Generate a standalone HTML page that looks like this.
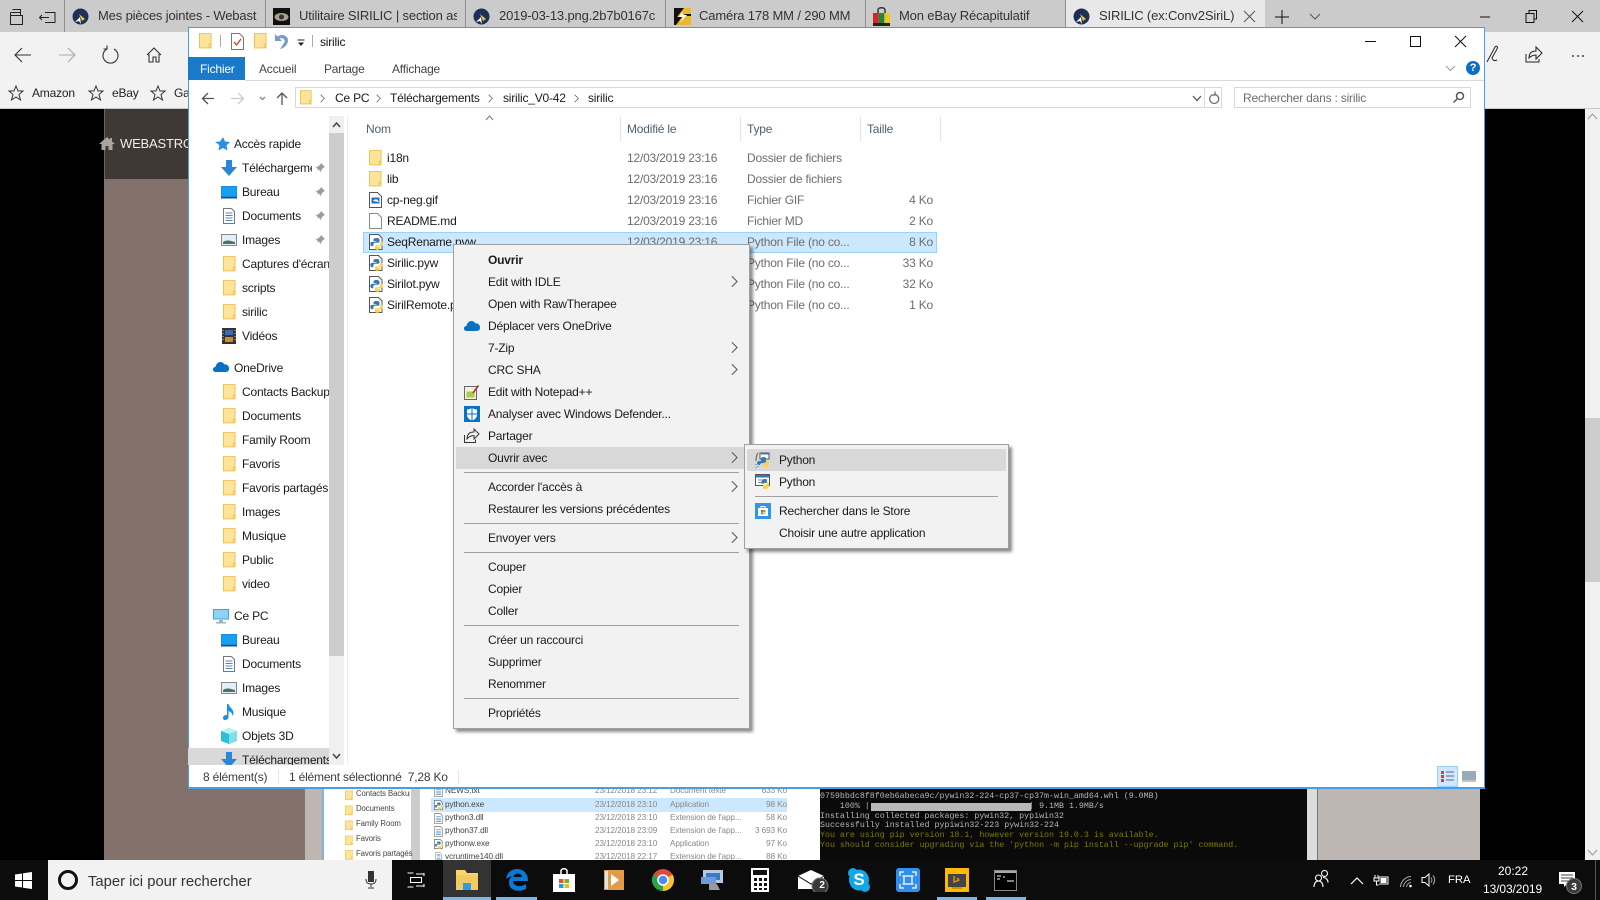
<!DOCTYPE html>
<html lang="fr"><head><meta charset="utf-8"><title>SIRILIC</title>
<style>
html,body{margin:0;padding:0;width:1600px;height:900px;overflow:hidden;background:#000}
body{position:relative;font:12px/16px "Liberation Sans",sans-serif;letter-spacing:-.2px;color:#1a1a1a}
.a,.t,svg.i{position:absolute}
.t{white-space:nowrap;height:16px}
.g{color:#6d6d6d}
.h{color:#4c607a}
.tab{position:absolute;top:8px;font-size:13px;letter-spacing:-.15px;color:#333;white-space:nowrap;overflow:hidden;height:16px}
.sep{position:absolute;background:#a0a0a0;height:1px}
.tb{position:absolute;color:#fff;white-space:nowrap;letter-spacing:0}
.sm{position:absolute;font-size:8.2px;line-height:10px;color:#444;white-space:nowrap;letter-spacing:-.1px}
.tm{position:absolute;left:820px;font:8.3px/10px "Liberation Mono",monospace;letter-spacing:0;color:#b5b5b5;white-space:pre}
</style></head><body>
<svg width="0" height="0" style="position:absolute"><defs>
<symbol id="fo" viewBox="0 0 14 17"><path d="M.5.5h12.5v15.5H.5z" fill="#fee49a" stroke="#eac04e"/><path d="M11 16v-4h2.500" fill="none" stroke="#eac04e"/></symbol>
<symbol id="py" viewBox="0 0 14 16"><path d="M.5.5h9l3.500 3.500v11.500H.500z" fill="#fff" stroke="#555"/><path d="M7.500 4C5 4 4.500 5 4.500 6v1.300h3v.6H3C1.800 7.900 1.300 8.800 1.300 10s.6 2.200 1.700 2.200h1.300v-1.700c0-1 .9-1.800 1.900-1.800h2.900c.9 0 1.400-.7 1.400-1.500V6c0-1-1-2-2.500-2z" fill="#3a78b0"/><path d="M8 15.800c2.500 0 3-1 3-2v-1.300H8v-.6h4.500c1 0 1.400-.9 1.400-2.100s-.5-2.100-1.500-2.100h-1.200v1.600c0 1-.9 1.900-1.900 1.900H7.400c-.9 0-1.400.7-1.400 1.500v1.100c0 1 .7 2 2 2z" fill="#fdd24a"/></symbol>
<symbol id="ch" viewBox="0 0 8 14"><path d="M1 1l6 6-6 6" fill="none" stroke="#44546a" stroke-width="1.100"/></symbol>
<symbol id="st" viewBox="0 0 16 16"><path d="M8 1l2 5h5l-4 3.500 1.500 5.500L8 12l-4.500 3L5 9.500 1 6h5z" fill="none" stroke="#333"/></symbol>
<symbol id="od" viewBox="0 0 16 10"><path d="M3 10c-2 0-3-1-3-2.500S1 5 2.500 5C3 2 5 0 7.500 0c2 0 3 1 4 2.500 2-.5 4.500 1 4.500 4 0 2-1 3.500-3 3.500z" fill="#0a72c4"/></symbol>
<symbol id="pin" viewBox="0 0 10 10"><path d="M6 0l4 4-1.500.5-2 2.500-.5 2-2.500-2.500L1 9l2-2.500L.8 4l2-.5 2.500-2z" fill="#9c9c9c"/></symbol>
<symbol id="mon" viewBox="0 0 16 13"><path d="M0 0h16v12.500H0z" fill="#1e88d8"/><path d="M1 1h14v9H1z" fill="#16a0f0"/><path d="M0 11h16v1.500H0z" fill="#0f4f8a"/></symbol>
<symbol id="doc" viewBox="0 0 12 16"><path d="M.5.500h8l3 3v12H.500z" fill="#fff" stroke="#777"/><path d="M2.500 5h7M2.500 7.500h7M2.500 10h7M2.500 12.500h7" stroke="#4a8ac4"/></symbol>
<symbol id="img" viewBox="0 0 16 12"><path d="M.5.500h15v11H.500z" fill="#dff0fa" stroke="#888"/><path d="M2 8c3-2 5-2 12 0v2H2z" fill="#47745a"/></symbol>
<symbol id="dn" viewBox="0 0 16 16"><path d="M5 0h6v7h5l-8 9-8-9h5z" fill="#2a86d8"/></symbol>
</defs></svg>

<!-- browser chrome -->
<div class="a" style="left:0;top:0;width:1600px;height:32px;background:#cbcbcb"></div>
<div class="a" style="left:0;top:32px;width:1600px;height:76px;background:#f2f2f2;border-bottom:1px solid #c8c8c8"></div>
<div class="a" style="left:1065px;top:0;width:200px;height:32px;background:#e8e8e8"></div>
<div class="a" style="left:64px;top:0;width:1px;height:32px;background:#8e8e8e"></div>
<div class="a" style="left:265px;top:0;width:1px;height:32px;background:#8e8e8e"></div>
<div class="a" style="left:465px;top:0;width:1px;height:32px;background:#8e8e8e"></div>
<div class="a" style="left:665px;top:0;width:1px;height:32px;background:#8e8e8e"></div>
<div class="a" style="left:865px;top:0;width:1px;height:32px;background:#8e8e8e"></div>
<div class="a" style="left:1065px;top:0;width:1px;height:32px;background:#8e8e8e"></div>
<svg class="i" style="left:9px;top:8px" width="64" height="18" fill="none" stroke="#222"><path d="M3.500 1.500h8v3M1.500 4.500h10v3M1.500 4.500v12h12v-9h-12"/><path d="M36 4.500h10v10H36M31 9.500h9M33 7l-2.500 2.500L33 12"/></svg>
<svg class="i" style="left:72px;top:8px" width="17" height="17"><circle cx="8.500" cy="8.500" r="8" fill="#1d3158"/><path d="M8 9l-5 5 4-1 2 3z" fill="#fff"/><path d="M7 6l6 5-3 2z" fill="#e6c13a"/></svg>
<div class="tab" style="left:98px;width:159px">Mes pièces jointes - Webast</div>
<svg class="i" style="left:273px;top:8px" width="17" height="17"><path d="M0 0h17v17H0z" fill="#111"/><ellipse cx="8.500" cy="9" rx="7" ry="4" fill="#a7a28a"/><circle cx="8.500" cy="9" r="2.500" fill="#333"/></svg>
<div class="tab" style="left:299px;width:158px">Utilitaire SIRILIC | section as</div>
<svg class="i" style="left:473px;top:8px" width="17" height="17"><circle cx="8.500" cy="8.500" r="8" fill="#1d3158"/><path d="M8 9l-5 5 4-1 2 3z" fill="#fff"/><path d="M7 6l6 5-3 2z" fill="#e6c13a"/></svg>
<div class="tab" style="left:499px;width:158px">2019-03-13.png.2b7b0167c</div>
<svg class="i" style="left:674px;top:8px" width="17" height="17"><path d="M0 0h17v17H0z" fill="#e9b92e"/><path d="M10 0L3 9h5L2 17h-2V0zM10 6h7v2h-5z" fill="#111"/><path d="M8 4L5 9h4l-3 6 7-8H9z" fill="#fff"/></svg>
<div class="tab" style="left:699px;width:158px">Caméra 178 MM / 290 MM</div>
<svg class="i" style="left:873px;top:7px" width="17" height="19"><path d="M5 6V3c0-3 7-3 7 0v3" fill="none" stroke="#333" stroke-width="1.500"/><path d="M0 6h5.700v13H0z" fill="#d0262d"/><path d="M5.700 6h5.700v13H5.700z" fill="#1b8a3a"/><path d="M11.400 6H17v13h-5.600z" fill="#edc61e"/><path d="M0 16h17v3H0z" fill="#222"/></svg>
<div class="tab" style="left:899px;width:158px">Mon eBay Récapitulatif</div>
<svg class="i" style="left:1073px;top:8px" width="17" height="17"><circle cx="8.500" cy="8.500" r="8" fill="#1d3158"/><path d="M8 9l-5 5 4-1 2 3z" fill="#fff"/><path d="M7 6l6 5-3 2z" fill="#e6c13a"/></svg>
<div class="tab" style="left:1099px;width:138px">SIRILIC (ex:Conv2SiriL) -</div>
<svg class="i" style="left:1243px;top:10px" width="84" height="14" fill="none" stroke="#333"><path d="M1 1l11 11M12 1L1 12" stroke="#555"/><path d="M39 0v14M32 7h14" stroke="#111"/><path d="M67 4l5 5 5-5" stroke="#555"/></svg>
<svg class="i" style="left:1478px;top:9px" width="110" height="15" fill="none" stroke="#111"><path d="M2 8h10"/><path d="M48 4.500h8v9h-8zM51 4.500v-3h7.500v8.500H56"/><path d="M94 2l11 11M105 2L94 13"/></svg>
<!-- nav icons -->
<svg class="i" style="left:14px;top:45px" width="155" height="20" fill="none" stroke="#333" stroke-width="1.100"><path d="M1 10h16M8 3L1 10l7 7"/><path d="M45 10h16M54 3l7 7-7 7" stroke="#aaa"/><path d="M93 4a7.500 7.500 0 1 0 7 0M93 .5v3.500h-3.500"/><path d="M133 10l7-7 7 7M135 9v8h4v-5h3v5h3V9"/></svg>
<svg class="i" style="left:8px;top:85px" width="16" height="16"><use href="#st"/></svg>
<div class="t" style="left:32px;top:85px;color:#222">Amazon</div>
<svg class="i" style="left:88px;top:85px" width="16" height="16"><use href="#st"/></svg>
<div class="t" style="left:112px;top:85px;color:#222">eBay</div>
<svg class="i" style="left:150px;top:85px" width="16" height="16"><use href="#st"/></svg>
<div class="t" style="left:174px;top:85px;color:#222;width:14px;overflow:hidden">Gamma</div>
<svg class="i" style="left:1486px;top:44px" width="100" height="20" fill="none" stroke="#222"><path d="M1 18L9 3c2-2 3 0 2 2L6 14c1 3 3 3 5 2"/><path d="M40 10v8h13v-3M43 14c0-5 3-7 7-7V3l6 6-6 6v-4c-3 0-5 1-7 3z"/><path d="M86 12h2M91 12h2M96 12h2" stroke-width="1.200"/></svg>

<!-- page under -->
<div class="a" style="left:0;top:109px;width:1600px;height:751px;background:#000"></div>
<div class="a" style="left:104px;top:109px;width:85px;height:70px;background:#3f3835;border-left:1px solid #666"></div>
<div class="a" style="left:104px;top:179px;width:201px;height:681px;background:#83726b"></div>
<div class="a" style="left:305px;top:788px;width:17px;height:72px;background:#bdb6b2"></div>
<svg class="i" style="left:99px;top:136px" width="16" height="15"><path d="M8 1L0 8h2.500v6h4v-4h3v4h4V8H16l-3-2.600V2h-2v1.700z" fill="#a9a29e"/></svg>
<div class="t" style="left:120px;top:136px;color:#eee;font-size:13px;width:69px;overflow:hidden">WEBASTRO</div>
<div class="a" style="left:1480px;top:788px;width:105px;height:72px;background:#000"></div>
<div class="a" style="left:1585px;top:109px;width:15px;height:751px;background:#f0f0f0"></div>
<div class="a" style="left:1585px;top:418px;width:15px;height:164px;background:#cdcdcd"></div>
<svg class="i" style="left:1587px;top:113px" width="11" height="7" fill="none" stroke="#999"><path d="M1 6l4.500-5L10 6"/></svg>
<svg class="i" style="left:1587px;top:849px" width="11" height="7" fill="none" stroke="#999"><path d="M1 1l4.500 5L10 1"/></svg>
<!-- window behind -->
<div class="a" style="left:322px;top:788px;width:2px;height:72px;background:#7fb4e6"></div>
<div class="a" style="left:324px;top:788px;width:496px;height:72px;background:#fff"></div>
<div class="a" style="left:411px;top:788px;width:9px;height:72px;background:#ccc"></div>
<div class="a" style="left:431px;top:798px;width:356px;height:14px;background:#cce8ff"></div>
<svg class="i" style="left:345px;top:790px" width="8" height="11"><use href="#fo"/></svg><div class="sm" style="left:356px;top:789px;font-size:7.800px;width:54px;overflow:hidden">Contacts Backup</div>
<svg class="i" style="left:345px;top:805px" width="8" height="11"><use href="#fo"/></svg><div class="sm" style="left:356px;top:804px;font-size:7.800px">Documents</div>
<svg class="i" style="left:345px;top:820px" width="8" height="11"><use href="#fo"/></svg><div class="sm" style="left:356px;top:819px;font-size:7.800px">Family Room</div>
<svg class="i" style="left:345px;top:835px" width="8" height="11"><use href="#fo"/></svg><div class="sm" style="left:356px;top:834px;font-size:7.800px">Favoris</div>
<svg class="i" style="left:345px;top:850px" width="8" height="10"><use href="#fo"/></svg><div class="sm" style="left:356px;top:849px;font-size:7.800px">Favoris partagés</div>
<svg class="i" style="left:434px;top:786px" width="9" height="11"><use href="#doc"/></svg><div class="sm" style="left:445px;top:786px">NEWS.txt</div><div class="sm" style="left:595px;top:786px;color:#888">23/12/2018 23:12</div><div class="sm" style="left:670px;top:786px;color:#888">Document texte</div><div class="sm" style="left:757px;width:30px;text-align:right;top:786px;color:#888">633 Ko</div>
<svg class="i" style="left:434px;top:800px" width="9" height="10"><use href="#py"/></svg><div class="sm" style="left:445px;top:800px">python.exe</div><div class="sm" style="left:595px;top:800px;color:#888">23/12/2018 23:10</div><div class="sm" style="left:670px;top:800px;color:#888">Application</div><div class="sm" style="left:757px;width:30px;text-align:right;top:800px;color:#888">98 Ko</div>
<svg class="i" style="left:434px;top:813px" width="9" height="11"><use href="#doc"/></svg><div class="sm" style="left:445px;top:813px">python3.dll</div><div class="sm" style="left:595px;top:813px;color:#888">23/12/2018 23:10</div><div class="sm" style="left:670px;top:813px;color:#888">Extension de l'app...</div><div class="sm" style="left:757px;width:30px;text-align:right;top:813px;color:#888">58 Ko</div>
<svg class="i" style="left:434px;top:826px" width="9" height="11"><use href="#doc"/></svg><div class="sm" style="left:445px;top:826px">python37.dll</div><div class="sm" style="left:595px;top:826px;color:#888">23/12/2018 23:09</div><div class="sm" style="left:670px;top:826px;color:#888">Extension de l'app...</div><div class="sm" style="left:747px;width:40px;text-align:right;top:826px;color:#888">3 693 Ko</div>
<svg class="i" style="left:434px;top:839px" width="9" height="10"><use href="#py"/></svg><div class="sm" style="left:445px;top:839px">pythonw.exe</div><div class="sm" style="left:595px;top:839px;color:#888">23/12/2018 23:10</div><div class="sm" style="left:670px;top:839px;color:#888">Application</div><div class="sm" style="left:757px;width:30px;text-align:right;top:839px;color:#888">97 Ko</div>
<svg class="i" style="left:434px;top:852px" width="9" height="8"><use href="#doc"/></svg><div class="sm" style="left:445px;top:852px;height:8px;overflow:hidden">vcruntime140.dll</div><div class="sm" style="left:595px;top:852px;height:8px;overflow:hidden;color:#888">23/12/2018 22:17</div><div class="sm" style="left:670px;top:852px;height:8px;overflow:hidden;color:#888">Extension de l'app...</div><div class="sm" style="left:757px;width:30px;text-align:right;top:852px;height:8px;overflow:hidden;color:#888">88 Ko</div>
<!-- terminal -->
<div class="a" style="left:820px;top:788px;width:487px;height:72px;background:#0a0a0a"></div>
<div class="a" style="left:1307px;top:788px;width:10px;height:72px;background:#dcdcdc"></div>
<div class="a" style="left:1317px;top:788px;width:163px;height:72px;background:#bdb6b2;border-left:1px solid #777;box-sizing:border-box"></div>
<div class="tm" style="top:792px">0759bbdc8f8f0eb6abeca9c/pywin32-224-cp37-cp37m-win_amd64.whl (9.0MB)</div>
<div class="tm" style="top:802px">    100% |                                | 9.1MB 1.9MB/s</div>
<div class="a" style="left:871px;top:803px;width:160px;height:8px;background:#b8b8b8"></div>
<div class="tm" style="top:812px">Installing collected packages: pywin32, pypiwin32</div>
<div class="tm" style="top:821px">Successfully installed pypiwin32-223 pywin32-224</div>
<div class="tm" style="top:831px;color:#7c7c00">You are using pip version 18.1, however version 19.0.3 is available.</div>
<div class="tm" style="top:841px;color:#7c7c00">You should consider upgrading via the 'python -m pip install --upgrade pip' command.</div>

<!-- explorer -->
<div class="a" style="left:188px;top:27px;width:1297px;height:762px;background:#fff;border:1px solid #4a9ce8;border-bottom-width:2px;box-sizing:border-box"></div>
<svg class="i" style="left:199px;top:33px" width="13" height="16"><use href="#fo"/></svg>
<div class="a" style="left:220px;top:35px;width:1px;height:12px;background:#aaa"></div>
<svg class="i" style="left:231px;top:33px" width="13" height="17"><path d="M.5.500h8l4 4v12H.500z" fill="#fff" stroke="#777"/><path d="M3 9l2.500 3L10 6" fill="none" stroke="#d83a20" stroke-width="1.300"/></svg>
<svg class="i" style="left:254px;top:33px" width="13" height="16"><use href="#fo"/></svg>
<svg class="i" style="left:274px;top:34px" width="15" height="16"><path d="M1 0v7h7L5.500 4.500C9 3 12 6 10 9l-4 6c5-1 8-5 8-9C14 2 8-1 3.500 2.500L1 0z" fill="#7b9bc4"/></svg>
<svg class="i" style="left:296px;top:39px" width="10" height="8"><path d="M1.500 1h7" stroke="#222"/><path d="M2 3.500h6L5 7z" fill="#222"/></svg>
<div class="a" style="left:312px;top:35px;width:1px;height:12px;background:#aaa"></div>
<div class="t" style="left:320px;top:34px;color:#111">sirilic</div>
<svg class="i" style="left:1364px;top:35px" width="105" height="13" fill="none" stroke="#111"><path d="M1 6.500h11"/><path d="M46.500 1.500h10v10h-10z"/><path d="M91 1l11 11M102 1L91 12"/></svg>
<div class="a" style="left:188px;top:57px;width:57px;height:23px;background:#1979ca"></div>
<div class="t" style="left:200px;top:61px;color:#fff">Fichier</div>
<div class="t" style="left:259px;top:61px;color:#444">Accueil</div>
<div class="t" style="left:324px;top:61px;color:#444">Partage</div>
<div class="t" style="left:392px;top:61px;color:#444">Affichage</div>
<div class="a" style="left:245px;top:80px;width:1239px;height:1px;background:#dadada"></div>
<svg class="i" style="left:1445px;top:65px" width="11" height="7" fill="none" stroke="#999"><path d="M1 1l4.500 4.500L10 1"/></svg>
<div class="a" style="left:1466px;top:61px;width:14px;height:14px;border-radius:50%;background:#0b6fc9;color:#fff;font:bold 11px/14px 'Liberation Sans',sans-serif;text-align:center">?</div>
<!-- address -->
<svg class="i" style="left:201px;top:91px" width="92" height="15" fill="none" stroke="#555" stroke-width="1.300"><path d="M1 7.500h12M7 2L1.500 7.500 7 13"/><path d="M30 7.500h12M37 2l5.500 5.500L37 13" stroke="#ccc"/><path d="M59 6l2.500 2.500L64 6" stroke="#888"/><path d="M81 14V2M76 7l5-5 5 5"/></svg>
<div class="a" style="left:295px;top:87px;width:927px;height:21px;border:1px solid #d9d9d9;box-sizing:border-box"></div>
<svg class="i" style="left:300px;top:90px" width="12" height="15"><use href="#fo"/></svg>
<svg class="i" style="left:320px;top:94px" width="5" height="9"><use href="#ch"/></svg>
<div class="t" style="left:335px;top:90px">Ce PC</div>
<svg class="i" style="left:376px;top:94px" width="5" height="9"><use href="#ch"/></svg>
<div class="t" style="left:390px;top:90px">Téléchargements</div>
<svg class="i" style="left:488px;top:94px" width="5" height="9"><use href="#ch"/></svg>
<div class="t" style="left:503px;top:90px">sirilic_V0-42</div>
<svg class="i" style="left:574px;top:94px" width="5" height="9"><use href="#ch"/></svg>
<div class="t" style="left:588px;top:90px">sirilic</div>
<svg class="i" style="left:1192px;top:95px" width="10" height="7" fill="none" stroke="#555" stroke-width="1.300"><path d="M1 1l4 4.500L9 1"/></svg>
<div class="a" style="left:1204px;top:88px;width:1px;height:19px;background:#d9d9d9"></div>
<svg class="i" style="left:1208px;top:91px" width="12" height="14" fill="none" stroke="#666" stroke-width="1.200"><path d="M7 3.500a4.500 4.500 0 1 1-3 .5M7 .5v3.500H3.500"/></svg>
<div class="a" style="left:1234px;top:87px;width:237px;height:21px;border:1px solid #d9d9d9;box-sizing:border-box"></div>
<div class="t" style="left:1243px;top:90px;color:#6d6d6d">Rechercher dans : sirilic</div>
<svg class="i" style="left:1452px;top:91px" width="13" height="13" fill="none" stroke="#555" stroke-width="1.500"><circle cx="8" cy="5" r="3.500"/><path d="M5.500 7.500L1.500 11.500"/></svg>
<!-- nav pane -->
<div class="a" style="left:329px;top:116px;width:15px;height:649px;background:#f0f0f0"></div>
<div class="a" style="left:329px;top:133px;width:15px;height:523px;background:#cdcdcd"></div>
<svg class="i" style="left:332px;top:121px" width="9" height="7" fill="none" stroke="#444" stroke-width="1.500"><path d="M1 6l3.500-4L8 6"/></svg>
<svg class="i" style="left:332px;top:753px" width="9" height="7" fill="none" stroke="#444" stroke-width="1.500"><path d="M1 1l3.500 4L8 1"/></svg>
<div class="a" style="left:188px;top:748px;width:141px;height:17px;background:#d9d9d9"></div>
<div class="a" style="left:347px;top:116px;width:1px;height:649px;background:#ececec"></div>

<svg class="i" style="left:215px;top:137px" width="15" height="14"><path d="M8 0l2 4.500 5 .5-3.500 3.500 1 5L8 11l-4.500 2.500 1-5L3 7 0 5l5-.5z" fill="#2a8fe0"/></svg>
<div class="t" style="left:234px;top:136px">Accès rapide</div>
<svg class="i" style="left:221px;top:160px" width="16" height="16"><use href="#dn"/></svg>
<div class="t" style="left:242px;top:160px;width:70px;overflow:hidden">Téléchargements</div>
<svg class="i" style="left:315px;top:163px" width="10" height="10"><use href="#pin"/></svg>
<svg class="i" style="left:221px;top:186px" width="16" height="13"><use href="#mon"/></svg>
<div class="t" style="left:242px;top:184px">Bureau</div>
<svg class="i" style="left:315px;top:187px" width="10" height="10"><use href="#pin"/></svg>
<svg class="i" style="left:223px;top:208px" width="12" height="16"><use href="#doc"/></svg>
<div class="t" style="left:242px;top:208px">Documents</div>
<svg class="i" style="left:315px;top:211px" width="10" height="10"><use href="#pin"/></svg>
<svg class="i" style="left:221px;top:234px" width="16" height="12"><use href="#img"/></svg>
<div class="t" style="left:242px;top:232px">Images</div>
<svg class="i" style="left:315px;top:235px" width="10" height="10"><use href="#pin"/></svg>
<svg class="i" style="left:223px;top:256px" width="13" height="16"><use href="#fo"/></svg>
<div class="t" style="left:242px;top:256px;width:87px;overflow:hidden">Captures d'écran</div>
<svg class="i" style="left:223px;top:280px" width="13" height="16"><use href="#fo"/></svg>
<div class="t" style="left:242px;top:280px">scripts</div>
<svg class="i" style="left:223px;top:304px" width="13" height="16"><use href="#fo"/></svg>
<div class="t" style="left:242px;top:304px">sirilic</div>
<svg class="i" style="left:222px;top:328px" width="14" height="16"><path d="M0 0h14v16H0z" fill="#333"/><path d="M3 2h8v5H3z" fill="#3a6ab0"/><path d="M3 9h8v5H3z" fill="#c8902a"/><path d="M1 2v12M13 2v12" stroke="#ddd" stroke-dasharray="1 2"/></svg>
<div class="t" style="left:242px;top:328px">Vidéos</div>
<svg class="i" style="left:213px;top:362px" width="16" height="10"><use href="#od"/></svg>
<div class="t" style="left:234px;top:360px">OneDrive</div>
<svg class="i" style="left:223px;top:384px" width="13" height="16"><use href="#fo"/></svg>
<div class="t" style="left:242px;top:384px;width:87px;overflow:hidden">Contacts Backup</div>
<svg class="i" style="left:223px;top:408px" width="13" height="16"><use href="#fo"/></svg>
<div class="t" style="left:242px;top:408px">Documents</div>
<svg class="i" style="left:223px;top:432px" width="13" height="16"><use href="#fo"/></svg>
<div class="t" style="left:242px;top:432px">Family Room</div>
<svg class="i" style="left:223px;top:456px" width="13" height="16"><use href="#fo"/></svg>
<div class="t" style="left:242px;top:456px">Favoris</div>
<svg class="i" style="left:223px;top:480px" width="13" height="16"><use href="#fo"/></svg>
<div class="t" style="left:242px;top:480px;width:87px;overflow:hidden">Favoris partagés</div>
<svg class="i" style="left:223px;top:504px" width="13" height="16"><use href="#fo"/></svg>
<div class="t" style="left:242px;top:504px">Images</div>
<svg class="i" style="left:223px;top:528px" width="13" height="16"><use href="#fo"/></svg>
<div class="t" style="left:242px;top:528px">Musique</div>
<svg class="i" style="left:223px;top:552px" width="13" height="16"><use href="#fo"/></svg>
<div class="t" style="left:242px;top:552px">Public</div>
<svg class="i" style="left:223px;top:576px" width="13" height="16"><use href="#fo"/></svg>
<div class="t" style="left:242px;top:576px">video</div>
<svg class="i" style="left:213px;top:609px" width="16" height="15"><path d="M0 0h16v10.500H0z" fill="#3aa6ea"/><path d="M1 1h14v8.500H1z" fill="#8fd2f6"/><path d="M6 11h4v2h3v1.500H3V13h3z" fill="#9fb2be"/></svg>
<div class="t" style="left:234px;top:608px">Ce PC</div>
<svg class="i" style="left:221px;top:634px" width="16" height="13"><use href="#mon"/></svg>
<div class="t" style="left:242px;top:632px">Bureau</div>
<svg class="i" style="left:223px;top:656px" width="12" height="16"><use href="#doc"/></svg>
<div class="t" style="left:242px;top:656px">Documents</div>
<svg class="i" style="left:221px;top:682px" width="16" height="12"><use href="#img"/></svg>
<div class="t" style="left:242px;top:680px">Images</div>
<svg class="i" style="left:223px;top:704px" width="12" height="16"><path d="M4 0h1.500c.5 3 5 5 5 9 0 1-.5 2-1 3 0-3-2-4-4-5v6c0 2-2 3-3.500 3S0 15 0 13.500 2 11 4 11z" fill="#1a90e8"/></svg>
<div class="t" style="left:242px;top:704px">Musique</div>
<svg class="i" style="left:221px;top:728px" width="16" height="16"><path d="M8 0l8 3v10l-8 3-8-3V3z" fill="#2cc0d8"/><path d="M8 6l8-3v10l-8 3z" fill="#7be0ea"/><path d="M8 6L0 3l8-3 8 3z" fill="#b9f0f5"/></svg>
<div class="t" style="left:242px;top:728px">Objets 3D</div>
<svg class="i" style="left:221px;top:752px" width="16" height="13" viewBox="0 0 16 13" preserveAspectRatio="xMinYMin slice"><use href="#dn" width="16" height="16"/></svg>
<div class="t" style="left:242px;top:752px;width:87px;height:13px;overflow:hidden">Téléchargements</div>
<!-- list -->
<svg class="i" style="left:485px;top:115px" width="9" height="6" fill="none" stroke="#777"><path d="M1 5l3.500-4L8 5"/></svg>
<div class="t h" style="left:366px;top:121px">Nom</div>
<div class="t h" style="left:627px;top:121px">Modifié le</div>
<div class="t h" style="left:747px;top:121px">Type</div>
<div class="t h" style="left:867px;top:121px">Taille</div>
<div class="a" style="left:620px;top:116px;width:1px;height:25px;background:#e5e5e5"></div>
<div class="a" style="left:740px;top:116px;width:1px;height:25px;background:#e5e5e5"></div>
<div class="a" style="left:860px;top:116px;width:1px;height:25px;background:#e5e5e5"></div>
<div class="a" style="left:940px;top:116px;width:1px;height:25px;background:#e5e5e5"></div>
<div class="a" style="left:363px;top:232px;width:574px;height:21px;background:#cce8ff;border:1px solid #99d1ff;box-sizing:border-box"></div>
<svg class="i" style="left:369px;top:150px" width="13" height="16"><use href="#fo"/></svg>
<div class="t" style="left:387px;top:150px">i18n</div><div class="t g" style="left:627px;top:150px">12/03/2019 23:16</div><div class="t g" style="left:747px;top:150px">Dossier de fichiers</div>
<svg class="i" style="left:369px;top:171px" width="13" height="16"><use href="#fo"/></svg>
<div class="t" style="left:387px;top:171px">lib</div><div class="t g" style="left:627px;top:171px">12/03/2019 23:16</div><div class="t g" style="left:747px;top:171px">Dossier de fichiers</div>
<svg class="i" style="left:369px;top:192px" width="13" height="16"><path d="M.5.500h8l4 4v11H.500z" fill="#fff" stroke="#555"/><path d="M2.500 5.500h8v6h-8z" fill="#1c72c4"/><path d="M4 9l2-2 1 1 1-1 2 3z" fill="#fff"/></svg>
<div class="t" style="left:387px;top:192px">cp-neg.gif</div><div class="t g" style="left:627px;top:192px">12/03/2019 23:16</div><div class="t g" style="left:747px;top:192px">Fichier GIF</div><div class="t g" style="left:893px;width:40px;text-align:right;top:192px">4 Ko</div>
<svg class="i" style="left:369px;top:213px" width="13" height="16"><path d="M.5.500h8l4 4v11H.500z" fill="#fff" stroke="#888"/></svg>
<div class="t" style="left:387px;top:213px">README.md</div><div class="t g" style="left:627px;top:213px">12/03/2019 23:16</div><div class="t g" style="left:747px;top:213px">Fichier MD</div><div class="t g" style="left:893px;width:40px;text-align:right;top:213px">2 Ko</div>
<svg class="i" style="left:369px;top:234px" width="14" height="16"><use href="#py"/></svg>
<div class="t" style="left:387px;top:234px">SeqRename.pyw</div><div class="t g" style="left:627px;top:234px">12/03/2019 23:16</div><div class="t g" style="left:747px;top:234px">Python File (no co...</div><div class="t g" style="left:893px;width:40px;text-align:right;top:234px">8 Ko</div>
<svg class="i" style="left:369px;top:255px" width="14" height="16"><use href="#py"/></svg>
<div class="t" style="left:387px;top:255px">Sirilic.pyw</div><div class="t g" style="left:627px;top:255px">12/03/2019 23:16</div><div class="t g" style="left:747px;top:255px">Python File (no co...</div><div class="t g" style="left:893px;width:40px;text-align:right;top:255px">33 Ko</div>
<svg class="i" style="left:369px;top:276px" width="14" height="16"><use href="#py"/></svg>
<div class="t" style="left:387px;top:276px">Sirilot.pyw</div><div class="t g" style="left:627px;top:276px">12/03/2019 23:16</div><div class="t g" style="left:747px;top:276px">Python File (no co...</div><div class="t g" style="left:893px;width:40px;text-align:right;top:276px">32 Ko</div>
<svg class="i" style="left:369px;top:297px" width="14" height="16"><use href="#py"/></svg>
<div class="t" style="left:387px;top:297px">SirilRemote.pyw</div><div class="t g" style="left:627px;top:297px">12/03/2019 23:16</div><div class="t g" style="left:747px;top:297px">Python File (no co...</div><div class="t g" style="left:893px;width:40px;text-align:right;top:297px">1 Ko</div>
<!-- status -->
<div class="t" style="left:203px;top:769px;color:#3c3c3c">8 élément(s)</div>
<div class="a" style="left:278px;top:770px;width:1px;height:14px;background:#e5e5e5"></div>
<div class="t" style="left:289px;top:769px;color:#3c3c3c">1 élément sélectionné&nbsp; 7,28 Ko</div>
<div class="a" style="left:458px;top:770px;width:1px;height:14px;background:#e5e5e5"></div>
<div class="a" style="left:1437px;top:766px;width:21px;height:21px;background:#cce8ff;border:1px solid #99d1ff;box-sizing:border-box"></div>
<svg class="i" style="left:1441px;top:770px" width="38" height="13"><path d="M0 1h3v3H0zM0 5h3v3H0zM0 9h3v3H0z" fill="#c44"/><path d="M5 2h8M5 6h8M5 10h8" stroke="#667"/><path d="M21 1h14v9H21z" fill="#9ab"/><path d="M21 11h14" stroke="#888"/></svg>

<!-- context menu -->
<div class="a" style="left:453px;top:244px;width:297px;height:485px;background:#f2f2f2;border:1px solid #a0a0a0;box-sizing:border-box;box-shadow:3px 3px 3px rgba(0,0,0,.45)"></div>
<div class="a" style="left:456px;top:447px;width:288px;height:22px;background:#d8d8d8"></div>
<div class="t" style="left:488px;top:252px;font-weight:bold">Ouvrir</div>
<div class="t" style="left:488px;top:274px">Edit with IDLE</div>
<div class="t" style="left:488px;top:296px">Open with RawTherapee</div>
<div class="t" style="left:488px;top:318px">Déplacer vers OneDrive</div>
<div class="t" style="left:488px;top:340px">7-Zip</div>
<div class="t" style="left:488px;top:362px">CRC SHA</div>
<div class="t" style="left:488px;top:384px">Edit with Notepad++</div>
<div class="t" style="left:488px;top:406px">Analyser avec Windows Defender...</div>
<div class="t" style="left:488px;top:428px">Partager</div>
<div class="t" style="left:488px;top:450px">Ouvrir avec</div>
<div class="sep" style="left:464px;top:472px;width:275px"></div>
<div class="t" style="left:488px;top:479px">Accorder l'accès à</div>
<div class="t" style="left:488px;top:501px">Restaurer les versions précédentes</div>
<div class="sep" style="left:464px;top:523px;width:275px"></div>
<div class="t" style="left:488px;top:530px">Envoyer vers</div>
<div class="sep" style="left:464px;top:552px;width:275px"></div>
<div class="t" style="left:488px;top:559px">Couper</div>
<div class="t" style="left:488px;top:581px">Copier</div>
<div class="t" style="left:488px;top:603px">Coller</div>
<div class="sep" style="left:464px;top:625px;width:275px"></div>
<div class="t" style="left:488px;top:632px">Créer un raccourci</div>
<div class="t" style="left:488px;top:654px">Supprimer</div>
<div class="t" style="left:488px;top:676px">Renommer</div>
<div class="sep" style="left:464px;top:698px;width:275px"></div>
<div class="t" style="left:488px;top:705px">Propriétés</div>
<svg class="i" style="left:731px;top:275px" width="7" height="13"><use href="#ch"/></svg>
<svg class="i" style="left:731px;top:341px" width="7" height="13"><use href="#ch"/></svg>
<svg class="i" style="left:731px;top:363px" width="7" height="13"><use href="#ch"/></svg>
<svg class="i" style="left:731px;top:451px" width="7" height="13"><use href="#ch"/></svg>
<svg class="i" style="left:731px;top:480px" width="7" height="13"><use href="#ch"/></svg>
<svg class="i" style="left:731px;top:531px" width="7" height="13"><use href="#ch"/></svg>
<svg class="i" style="left:464px;top:321px" width="16" height="10"><use href="#od"/></svg>
<svg class="i" style="left:464px;top:384px" width="16" height="16"><path d="M.5 2.500h12v13H.500z" fill="#f6f1d8" stroke="#666"/><path d="M2.500 7.500h8v6h-8z" fill="#a8cc50"/><path d="M9 9l5.500-7.500" stroke="#b03020" stroke-width="1.500"/></svg>
<svg class="i" style="left:464px;top:406px" width="16" height="16"><path d="M0 0h16v16H0z" fill="#0a72c4"/><path d="M8 2c2 1 3 1.500 5 1.500v5c0 3-2 5-5 6-3-1-5-3-5-6v-5C5 3.500 6 3 8 2z" fill="#fff"/><path d="M8 2v12.500M3 8h10" stroke="#0a72c4"/></svg>
<svg class="i" style="left:464px;top:428px" width="16" height="15" fill="none" stroke="#333"><path d="M.5 7v7.500h11v-3"/><path d="M3 11c0-5 3-7 7-7V1l5 5-5 5V7.500c-3 0-5 1-7 3.500z"/></svg>
<!-- submenu -->
<div class="a" style="left:744px;top:444px;width:265px;height:105px;background:#f2f2f2;border:1px solid #a0a0a0;box-sizing:border-box;box-shadow:3px 3px 3px rgba(0,0,0,.45)"></div>
<div class="a" style="left:747px;top:449px;width:259px;height:22px;background:#d8d8d8"></div>
<svg class="i" style="left:755px;top:452px" width="16" height="16"><path d="M3 1c-1.500 2-2 5-2 8" fill="none" stroke="#555"/><path d="M5 1h9v6H5z" fill="#fff" stroke="#555"/><path d="M6 1h8v1.500H6z" fill="#2a7ac4"/><path d="M9 5c-3 0-3 1-3 3v1H4c-1 0-2 1-2 2s1 2 2 2h1c0-1 1-2 3-2h2c1 0 1-1 1-2V7c0-1-1-2-2-2z" fill="#3a78b0"/><path d="M10 15c3 0 4-1 4-2v-2c0-1-.5-2-1.500-2H11c0 1-1 2-3 2v2c0 1 1 2 2 2z" fill="#fdd24a"/><path d="M1 12v1M1 15v1M3 14v1" stroke="#2a7ac4"/></svg>
<svg class="i" style="left:755px;top:474px" width="16" height="16"><path d="M.5.500h14v11H.500z" fill="#fff" stroke="#555"/><path d="M1 1h13v2.500H1z" fill="#2a7ac4"/><path d="M3 6h5M3 8.500h5" stroke="#888"/><path d="M10 5c-2 0-3 1-3 2.500h-1v2h3l3-1V6c0-1-1-1-2-1z" fill="#3a78b0"/><path d="M9 15c3 0 5-1 5-3V9c0-1-1-1-2-1 0 2-1 3-3 3H8v2c0 1 0 2 1 2z" fill="#fdd24a"/></svg>
<div class="t" style="left:779px;top:452px">Python</div>
<div class="t" style="left:779px;top:474px">Python</div>
<div class="sep" style="left:755px;top:496px;width:243px"></div>
<svg class="i" style="left:755px;top:503px" width="16" height="16"><path d="M0 0h16v16H0z" fill="#2f96e8"/><path d="M3 5h10v8H3z" fill="#fff"/><path d="M6 5V3.500h4V5" fill="none" stroke="#fff"/><path d="M6 7h2v2H6z" fill="#e84c2c"/><path d="M8.300 7h2v2h-2z" fill="#5cb030"/><path d="M6 9.300h2v2H6z" fill="#2a90e0"/><path d="M8.300 9.300h2v2h-2z" fill="#f0b820"/></svg>
<div class="t" style="left:779px;top:503px">Rechercher dans le Store</div>
<div class="t" style="left:779px;top:525px">Choisir une autre application</div>

<!-- taskbar -->
<div class="a" style="left:0;top:860px;width:1600px;height:40px;background:#0c0c0c"></div>
<svg class="i" style="left:15px;top:872px" width="17" height="17"><path d="M0 2.500L7 1.500v6.500H0zM8 1.300L17 0v8H8zM0 9h7v6.500l-7-1zM8 9h9v8l-9-1.300z" fill="#fff"/></svg>
<div class="a" style="left:48px;top:860px;width:344px;height:40px;background:#f2f2f2"></div>
<div class="a" style="left:58px;top:870px;width:20px;height:20px;border:3px solid #111;border-radius:50%;box-sizing:border-box"></div>
<div class="t" style="left:88px;top:873.500px;font-size:14.800px;letter-spacing:0;color:#333">Taper ici pour rechercher</div>
<svg class="i" style="left:365px;top:871px" width="12" height="18"><path d="M3 0h6v11H3z" fill="#333"/><path d="M1 8c0 4 2 5 5 5s5-1 5-5" fill="none" stroke="#333"/><path d="M6 13v3M3 17h6" stroke="#333"/></svg>
<svg class="i" style="left:407px;top:871px" width="18" height="18" fill="none" stroke="#fff"><path d="M.5 2h6M.5 16h6M3.500 6.500h11v5h-11zM9 3h8M9 15h8M17 2v3M17 13v3"/></svg>
<div class="a" style="left:443px;top:860px;width:48px;height:40px;background:#333"></div>
<div class="a" style="left:443px;top:897px;width:48px;height:3px;background:#76b9ed"></div>
<div class="a" style="left:496px;top:897px;width:41px;height:3px;background:#76b9ed"></div>
<div class="a" style="left:937px;top:897px;width:40px;height:3px;background:#76b9ed"></div>
<div class="a" style="left:986px;top:897px;width:40px;height:3px;background:#76b9ed"></div>
<svg class="i" style="left:456px;top:870px" width="22" height="20"><path d="M0 0h9l2 3h11v17H0z" fill="#fbd56d"/><path d="M0 5h22v15H0z" fill="#f3cb60"/><path d="M7 13h8v7H7z" fill="#2d9be8"/></svg>
<svg class="i" style="left:505px;top:869px" width="23" height="22"><path d="M1 10C2 3 7 0 12 0c7 0 11 5 11 12H8c0 5 7 7 13 3v5c-8 4-17 1-17-6 0-3 1-5 3-7-3 1-5 2-6 3zM8 8h9c0-4-7-5-9 0z" fill="#0b78d8"/></svg>
<svg class="i" style="left:553px;top:868px" width="22" height="24"><path d="M8 6V3c0-3 6-3 6 0v3" fill="none" stroke="#fff" stroke-width="1.500"/><path d="M0 6h22v18H0z" fill="#fff"/><path d="M6 11h4.500v4H6z" fill="#e8502c"/><path d="M11.500 11H16v4h-4.500z" fill="#6cb52c"/><path d="M6 16h4.500v4H6z" fill="#18a0e8"/><path d="M11.500 16H16v4h-4.500z" fill="#f6b81c"/></svg>
<svg class="i" style="left:604px;top:870px" width="20" height="20"><path d="M0 0h20v20H0z" rx="3" fill="#e29c48"/><path d="M7 4v12l8-6z" fill="#fff"/><path d="M1 1h3v18H1z" fill="#d8e6f0"/></svg>
<svg class="i" style="left:652px;top:869px" width="22" height="22"><circle cx="11" cy="11" r="11" fill="#dd4b3e"/><path d="M11 11L1.500 5.500A11 11 0 0 0 11 22z" fill="#2aa24a"/><path d="M11 11l9.500-5.500A11 11 0 0 1 11 22z" fill="#f7c52a"/><circle cx="11" cy="11" r="5" fill="#4a8cf0" stroke="#fff" stroke-width="1.500"/></svg>
<svg class="i" style="left:701px;top:870px" width="24" height="22"><path d="M2 0h20v13H2z" fill="#b9c9e0"/><path d="M5 3h14v7H5z" fill="#3d7ac4"/><path d="M0 7h15v7H0z" fill="#6d9bdc"/><path d="M8 14h8l3 6H8z" fill="#9a9a9a"/></svg>
<svg class="i" style="left:751px;top:868px" width="18" height="24"><path d="M0 0h18v24H0z" fill="#fff"/><path d="M2 2h14v5H2z" fill="#111"/><path d="M3 10h3v3H3zM8 10h3v3H8zM13 10h3v3h-3zM3 15h3v3H3zM8 15h3v3H8zM13 15h3v3h-3zM3 20h3v2H3zM8 20h3v2H8zM13 20h3v2h-3z" fill="#111"/></svg>
<svg class="i" style="left:798px;top:870px" width="34" height="22"><path d="M0 6L13 0l13 6v13H0z" fill="#fff"/><path d="M0 6l13 8 13-8" fill="none" stroke="#0c0c0c"/><circle cx="22" cy="16" r="8" fill="#3a3a3a" stroke="#777"/></svg>
<div class="t" style="left:816px;top:878px;width:12px;text-align:center;color:#fff;font:bold 10px/16px 'Liberation Sans',sans-serif">2</div>
<svg class="i" style="left:848px;top:868px" width="22" height="24"><ellipse cx="11" cy="12" rx="10" ry="10.500" fill="#12a5e8"/><circle cx="5" cy="5" r="5" fill="#12a5e8"/><circle cx="17" cy="19" r="5" fill="#12a5e8"/></svg>
<div class="t" style="left:853px;top:872px;width:12px;text-align:center;color:#fff;font:bold 17px/16px 'Liberation Sans',sans-serif">S</div>
<svg class="i" style="left:896px;top:868px" width="24" height="24"><rect width="24" height="24" rx="3" fill="#2f8ef0"/><path d="M4 8V4h4M16 4h4v4M20 16v4h-4M8 20H4v-4M8 8h8v8H8zM6.500 8h11M6.500 16h11" fill="none" stroke="#fff" stroke-width="1.300"/></svg>
<svg class="i" style="left:945px;top:868px" width="24" height="24"><path d="M0 0h24v24H0z" fill="#ffb900"/><path d="M3 6h18v13H3z" fill="#444"/><path d="M9 8v6l3-1 2-1-2-2" fill="none" stroke="#e89a10" stroke-width="1.300"/><path d="M7 20h10" stroke="#997000"/></svg>
<svg class="i" style="left:994px;top:870px" width="23" height="21"><path d="M.5.500h22v20H.500z" fill="#000" stroke="#888"/><path d="M1 1h21v2H1z" fill="#aaa"/><path d="M3 6h4M3 9h3M9 7h2M13 11h7" stroke="#fff"/></svg>
<!-- tray -->
<svg class="i" style="left:1313px;top:870px" width="16" height="18" fill="none" stroke="#fff" stroke-width="1.100"><circle cx="11.500" cy="3.500" r="3"/><circle cx="5.500" cy="8" r="3"/><path d="M1 17c0-4 2-6 4.500-6s4.500 2 4.500 6M10 7.500c3 0 5 2 5 5"/></svg>
<svg class="i" style="left:1350px;top:877px" width="14" height="8" fill="none" stroke="#fff" stroke-width="1.200"><path d="M1 7l6-6 6 6"/></svg>
<svg class="i" style="left:1373px;top:874px" width="16" height="12" fill="none" stroke="#fff"><path d="M2 1v3M5 1v3M1 4h5v3H1zM3.500 7v4h2"/><path d="M6 3h9v7H6" /><path d="M8 4.500h5v4H8z" fill="#fff"/></svg>
<svg class="i" style="left:1400px;top:875px" width="13" height="13" fill="none" stroke="#aaa"><path d="M.5 12A11 11 0 0 1 11 1.500M3.500 12A8 8 0 0 1 11 4.500M6.500 12A5 5 0 0 1 11 7.500"/><circle cx="10.500" cy="11" r="1.300" fill="#fff" stroke="none"/></svg>
<svg class="i" style="left:1421px;top:873px" width="16" height="14" fill="none" stroke="#fff"><path d="M1 4.500h3L8 1v12L4 9.500H1z"/><path d="M10 4.500a4 4 0 0 1 0 5M12 2.500a7 7 0 0 1 0 9" stroke="#aaa"/></svg>
<div class="tb" style="left:1448px;top:872px;font-size:11.300px">FRA</div>
<div class="tb" style="left:1498px;top:863px;font-size:12px;width:27px;text-align:center;">20:22</div>
<div class="tb" style="left:1483px;top:881px;font-size:12px;letter-spacing:-.1px;width:58px;text-align:center;">13/03/2019</div>
<svg class="i" style="left:1559px;top:872px" width="24" height="24"><path d="M0 0h16v12H8l-3 3v-3H0z" fill="#fff"/><path d="M2 3h12M2 6h12M2 9h8" stroke="#444"/><circle cx="15" cy="14" r="7.500" fill="#3a3a3a" stroke="#777"/></svg>
<div class="tb" style="left:1568px;top:879px;width:12px;text-align:center;font-weight:bold;font-size:10.500px">3</div>
<div class="a" style="left:1595px;top:860px;width:1px;height:40px;background:#555"></div>
</body></html>
